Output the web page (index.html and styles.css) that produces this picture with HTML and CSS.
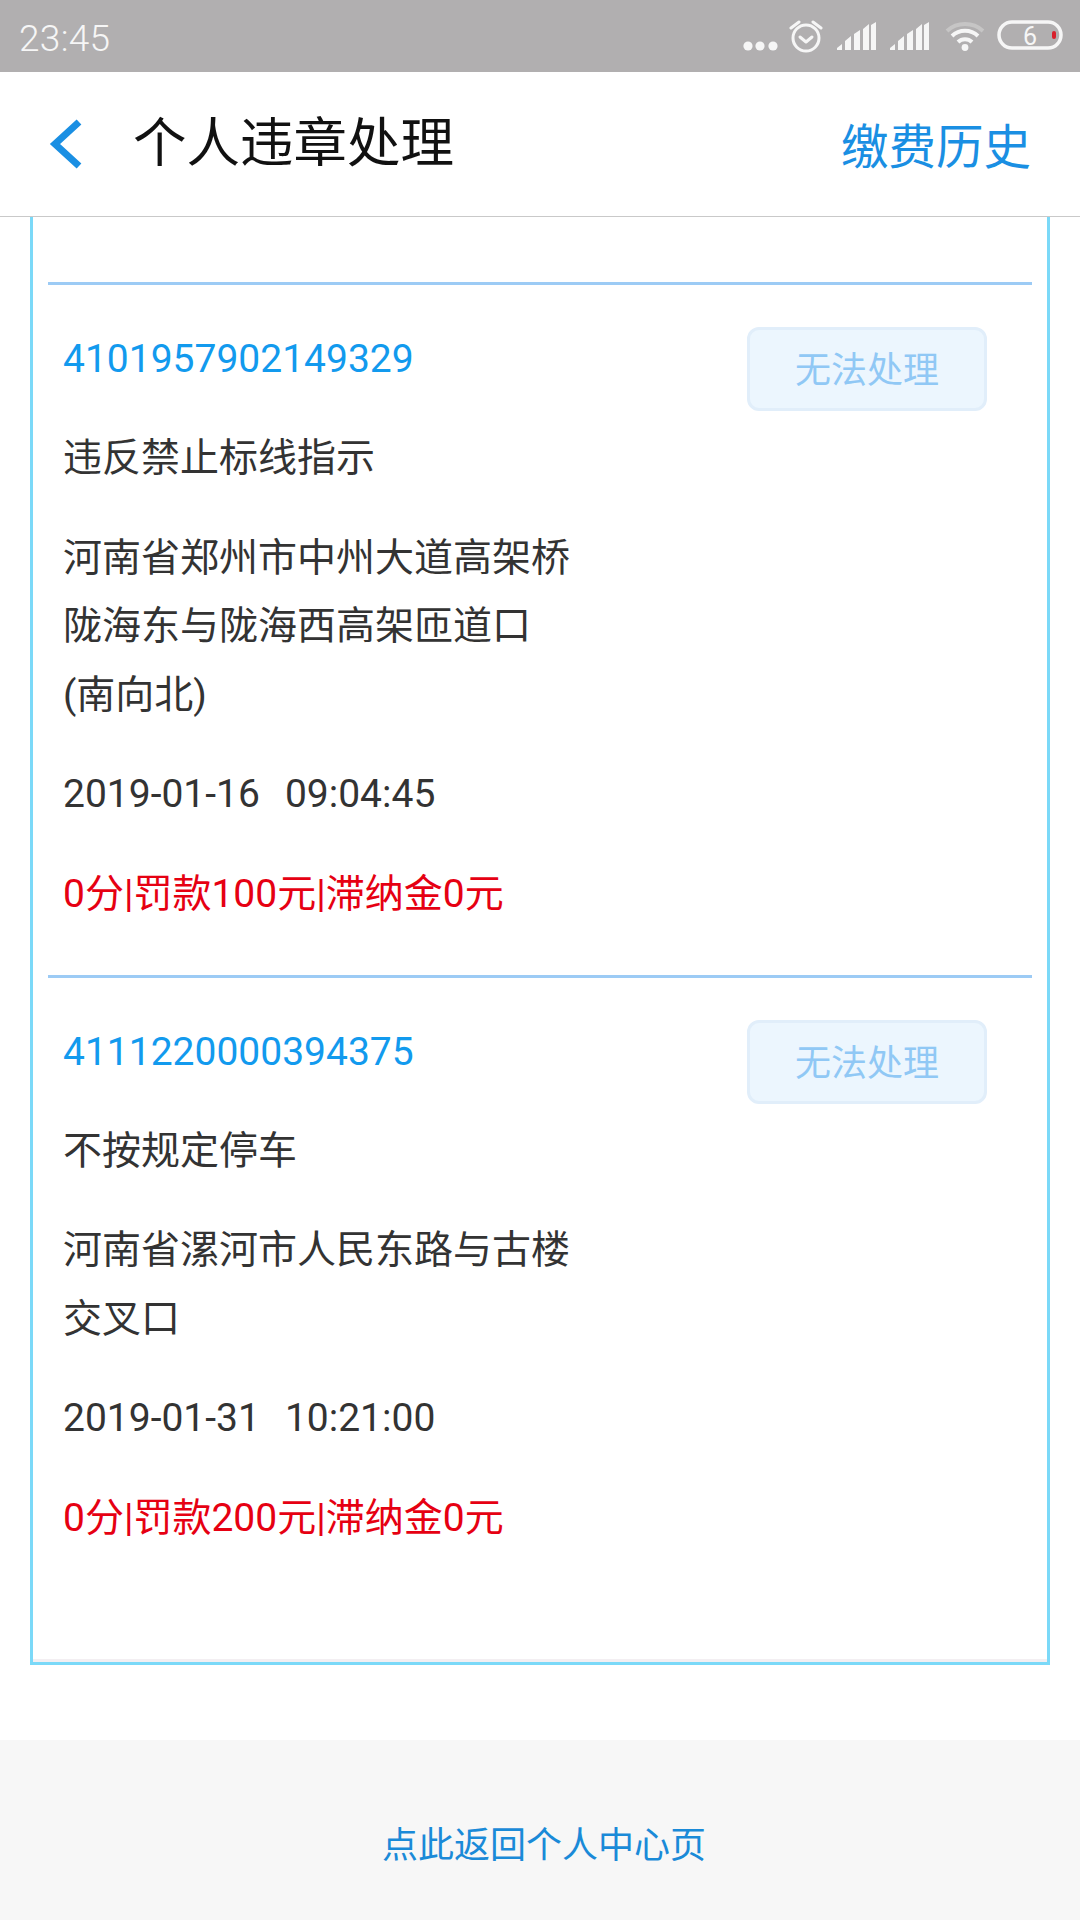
FILE: index.html
```html
<!DOCTYPE html>
<html lang="zh-CN">
<head>
  <meta charset="UTF-8" />
  <meta name="viewport" content="width=device-width, initial-scale=1.0"/>
  <title>个人违章处理</title>
  <link rel="stylesheet" href="styles.css">
</head>
<body>
  <div class="statusbar">
    <span class="clock">23:45</span>
    <div class="status-icons">
      <svg class="ic-dots" width="36" height="12" viewBox="0 0 36 12"><circle cx="6" cy="6" r="4.6"/><circle cx="18" cy="6" r="4.6"/><circle cx="31" cy="6" r="4.6"/></svg>
      <svg class="ic-alarm" width="34" height="34" viewBox="0 0 34 34">
        <circle cx="17" cy="19" r="13"/>
        <path d="M11 18l6 5 6-5"/>
        <path d="M2 9l8-6M32 9l-8-6"/>
      </svg>
      <svg class="ic-signal" width="39" height="28" viewBox="0 0 39 28"><path d="M0 28v-2l5-4v6zM8 28v-9l6-5v14zM17 28v-16l6-4v20zM26 28v-21l6-5v26zM34 28v-25l5-3v28z"/></svg>
      <svg class="ic-signal" width="39" height="28" viewBox="0 0 39 28"><path d="M0 28v-2l5-4v6zM8 28v-9l6-5v14zM17 28v-16l6-4v20zM26 28v-21l6-5v26zM34 28v-25l5-3v28z"/></svg>
      <svg class="ic-wifi" width="40" height="30" viewBox="0 0 40 30">
        <path class="dim" d="M2 10a27 27 0 0 1 36 0"/>
        <path d="M7 15a19 19 0 0 1 26 0"/>
        <path d="M13 21a10 10 0 0 1 14 0"/>
        <circle cx="20" cy="26.5" r="3.4"/>
      </svg>
      <svg class="ic-battery" width="66" height="30" viewBox="0 0 66 30">
        <rect x="2" y="2" width="62" height="26" rx="13"/>
        <text x="33" y="25">6</text>
        <rect class="level" x="55" y="11" width="4" height="8" rx="2"/>
      </svg>
    </div>
  </div>

  <div class="topbar">
    <svg class="back" width="34" height="50" viewBox="0 0 34 50"><path d="M30 3L6 25l24 22"/></svg>
    <h1 class="title">个人违章处理</h1>
    <a class="history">缴费历史</a>
  </div>

  <div class="content">
    <div class="frame">
      <div class="record">
        <div class="record-head">
          <span class="record-id">4101957902149329</span>
          <button class="btn-disabled">无法处理</button>
        </div>
        <p class="record-row">违反禁止标线指示</p>
        <p class="record-row">河南省郑州市中州大道高架桥<br>陇海东与陇海西高架匝道口<br>(南向北)</p>
        <p class="record-row">2019-01-16<span class="time">09:04:45</span></p>
        <p class="record-row fine">0分|罚款100元|滞纳金0元</p>
      </div>
      <div class="record">
        <div class="record-head">
          <span class="record-id">4111220000394375</span>
          <button class="btn-disabled">无法处理</button>
        </div>
        <p class="record-row">不按规定停车</p>
        <p class="record-row">河南省漯河市人民东路与古楼<br>交叉口</p>
        <p class="record-row">2019-01-31<span class="time">10:21:00</span></p>
        <p class="record-row fine">0分|罚款200元|滞纳金0元</p>
      </div>
    </div>
  </div>

  <div class="footer"><a>点此返回个人中心页</a></div>
</body>
</html>
```

FILE: styles.css
```css
html, body { margin: 0; padding: 0; }
body { width: 1080px; height: 1920px; overflow: hidden; background: #fff; font-family: Roboto, "Noto Sans CJK SC", sans-serif; color: #333; }

.statusbar { height: 72px; background: #b1afb0; display: flex; align-items: center; justify-content: space-between; padding: 0 17px 0 19px; color: #f6f6f6; }
.clock { font-size: 37px; font-weight: 300; letter-spacing: 0.3px; margin-top: 4px; }
.status-icons { display: flex; align-items: flex-start; height: 72px; }
.status-icons svg { display: block; }
.ic-dots { fill: #f6f6f6; margin-top: 40px; }
.ic-alarm { margin: 19px 0 0 11px; fill: none; stroke: #f6f6f6; stroke-width: 3; stroke-linecap: round; stroke-linejoin: round; }
.ic-signal { fill: #f6f6f6; margin: 22px 0 0 14px; }
.ic-wifi { margin: 21px 0 0 16px; fill: none; stroke: #f6f6f6; stroke-width: 4; }
.ic-wifi .dim { stroke: #c6c5c5; }
.ic-wifi circle { fill: #f6f6f6; stroke: none; }
.ic-battery { margin: 20px 0 0 12px; fill: none; stroke: #f6f6f6; stroke-width: 3.5; }
.ic-battery text { fill: #f6f6f6; stroke: none; font-size: 25px; text-anchor: middle; }
.ic-battery .level { fill: #d8202c; stroke: none; }

.topbar { height: 144px; border-bottom: 1px solid #c9c9c9; display: flex; align-items: center; padding: 0 49px 0 49px; }
.back { fill: none; stroke: #1a8fe3; stroke-width: 7; flex: none; }
.title { margin: 0 0 0 50px; font-size: 53.5px; font-weight: 400; color: #111; flex: 1; line-height: 1; }
.history { font-size: 47.5px; color: #1a8fe3; margin-top: -2px; }

.content { padding: 0 30px 75px; }
.frame { height: 1448px; box-sizing: border-box; border: 3px solid #7bd9f8; border-top: 0; padding: 65px 15px 0 15px; box-shadow: inset 0 -3px 0 #f3eff2; }

.record { border-top: 3px solid #9ccbf5; padding: 40px 17px 46px 15px; }
.record-head { display: flex; justify-content: space-between; height: 68px; padding-right: 28px; }
.record-id { font-size: 39px; line-height: 68px; color: #129aee; }
.btn-disabled { width: 240px; height: 84px; margin-top: 2px; padding: 0 0 4px; box-sizing: border-box; background: #ecf6fe; border: 3px solid #e1eefa; border-radius: 12px; color: #90c8f5; font-family: inherit; font-size: 36px; }

.record-row { margin: 31px 0 0; font-size: 39px; line-height: 68.6px; }
.time { margin-left: 25px; }
.fine { color: #e60012; }

.footer { height: 180px; background: #f7f7f7; display: flex; align-items: center; justify-content: center; font-size: 36px; color: #1a8ad8; padding: 24px 0 0 8px; box-sizing: border-box; }
```
